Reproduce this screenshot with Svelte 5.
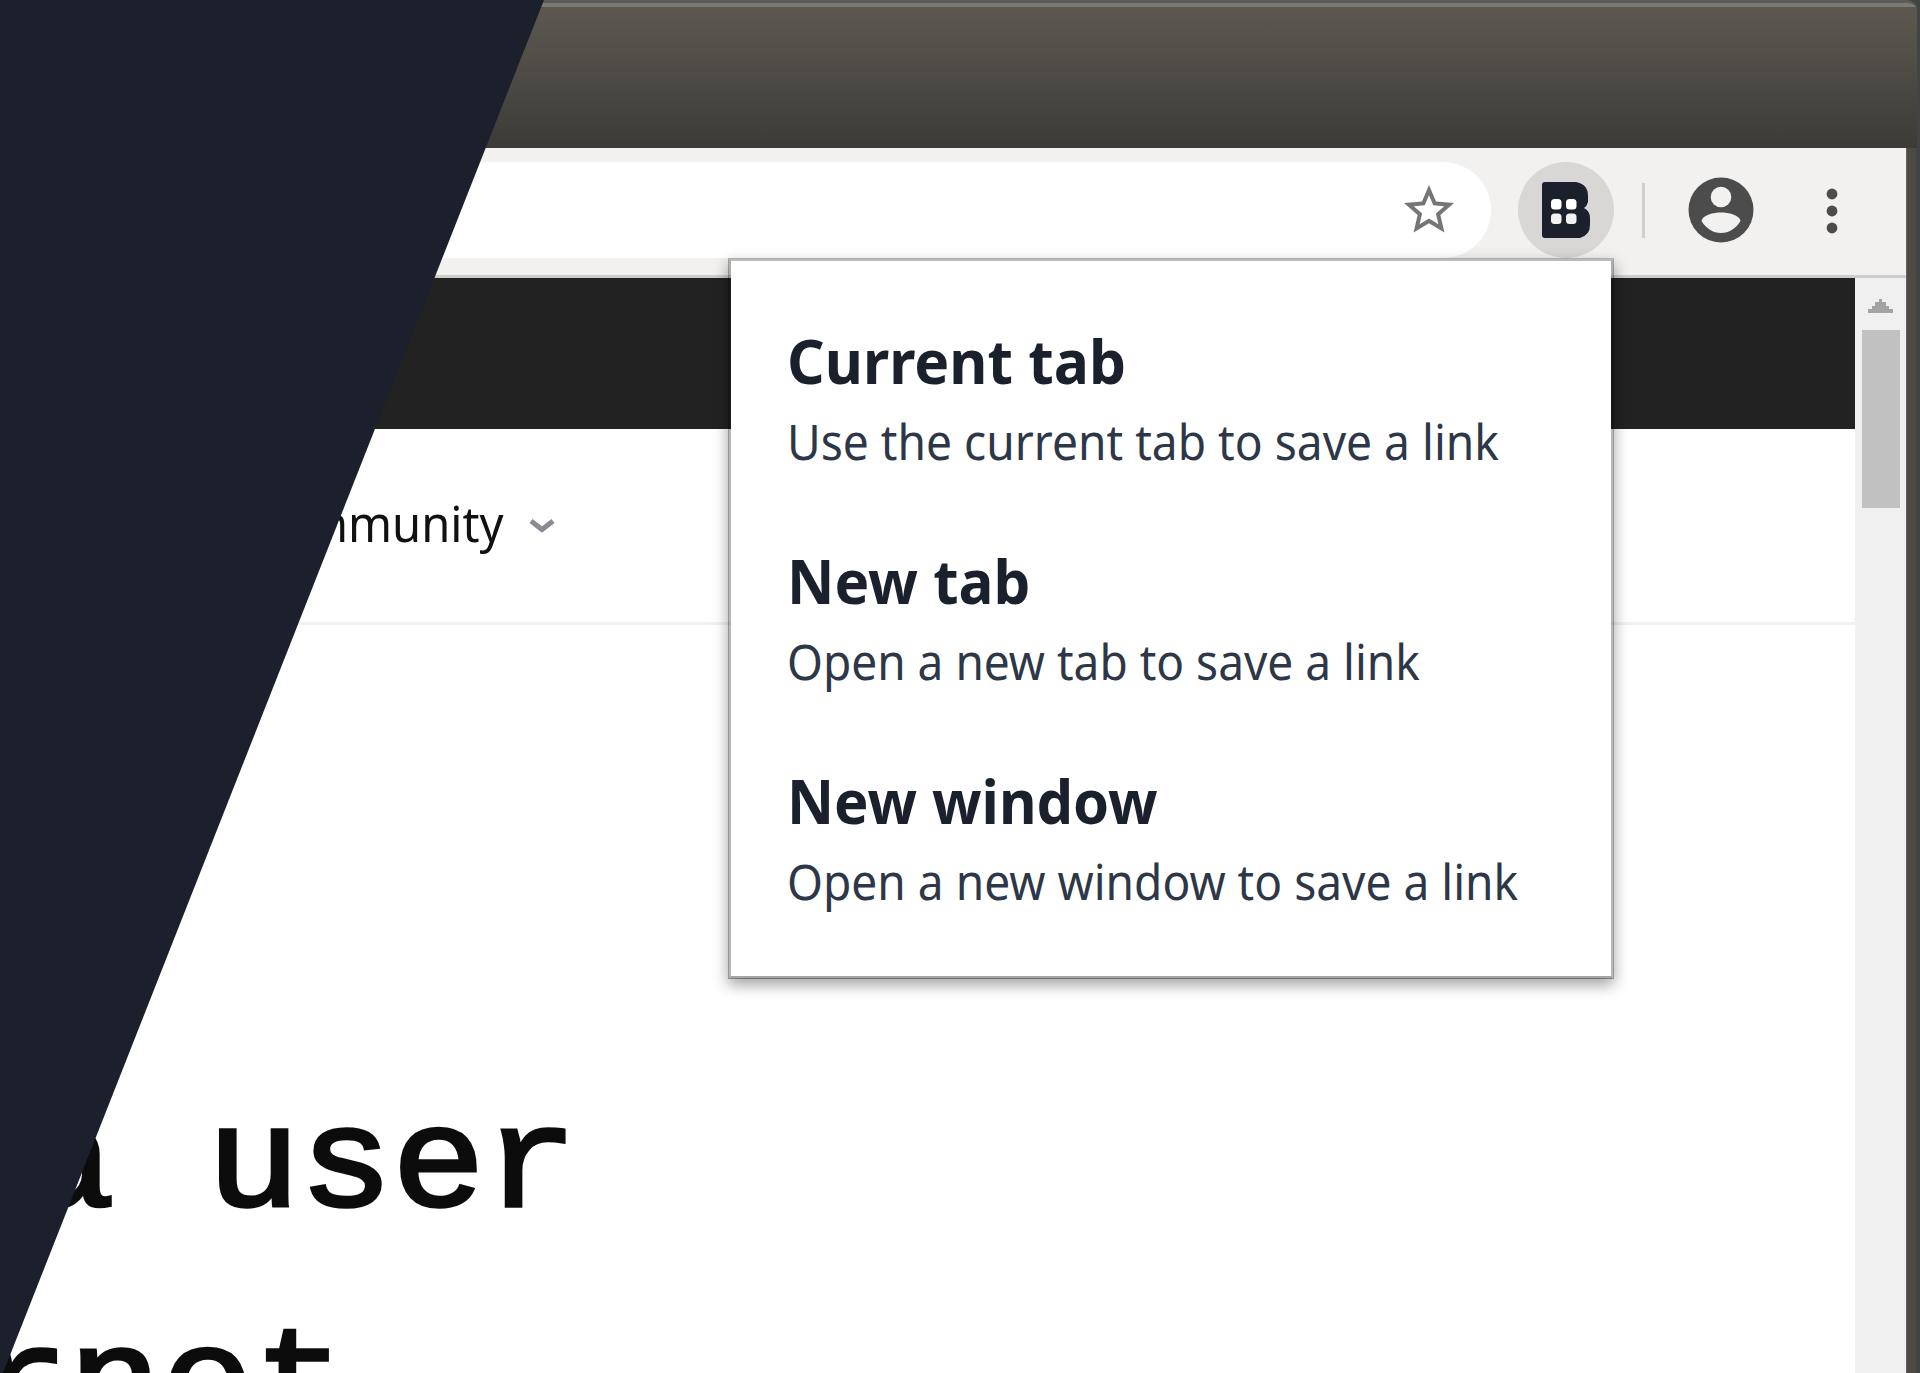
<script>
  const options = [
    { title: 'Current tab', text: 'Use the current tab to save a link', tw: 339, dw: 712 },
    { title: 'New tab', text: 'Open a new tab to save a link', tw: 243, dw: 633 },
    { title: 'New window', text: 'Open a new window to save a link', tw: 371, dw: 731 }
  ];

  // Condenses or widens a label horizontally so it fills the given width.
  function fit(node, width) {
    const natural = node.offsetWidth;
    if (natural) node.style.setProperty('--fit', width / natural);
  }
</script>

<div class="screen">
  <header class="titlebar"></header>

  <div class="window">
    <div class="content">
      <div class="toolbar">
        <div class="omnibox">
          <svg class="star" viewBox="0 0 24 24"><path d="M22 9.24l-7.19-.62L12 2 9.19 8.63 2 9.24l5.46 4.73L5.82 21 12 17.27 18.18 21l-1.63-7.03L22 9.24zM12 15.4l-3.76 2.27 1-4.28-3.32-2.88 4.38-.38L12 6.1l1.71 4.04 4.38.38-3.32 2.88 1 4.28L12 15.4z" /></svg>
        </div>
        <div class="extension">
          <svg width="48" height="56" viewBox="0 0 48 56">
            <path fill="#1b202c" d="M3 0H34Q46 2 46 14V20Q45 24 42 26Q48 29 48 36V43Q48 53 38 56H3Q0 56 0 53V3Q0 0 3 0Z" />
            <g fill="#fff"><rect x="9" y="17" width="10.5" height="10.5" rx="3.5" /><rect x="24" y="17" width="10.5" height="10.5" rx="3.5" /></g>
            <g fill="#f1f1f0"><rect x="9" y="31.500" width="10.500" height="10.500" rx="3.500" /><rect x="24" y="31.500" width="10.500" height="10.500" rx="3.500" /></g>
          </svg>
        </div>
        <div class="divider"></div>
        <svg class="avatar" viewBox="0 0 66 66">
          <circle cx="33" cy="33" r="32.500" fill="#4c4c4c" />
          <circle cx="33" cy="20" r="10.300" fill="#f2f1ef" />
          <path fill="#f2f1ef" d="M13.500 44C14 38 26 35.500 33 35.500S52 38 52.500 44C48 51.500 41 56 33 56S18 51.500 13.500 44Z" />
        </svg>
        <svg class="kebab" viewBox="0 0 12 46">
          <circle cx="6" cy="6" r="5.400" /><circle cx="6" cy="23" r="5.400" /><circle cx="6" cy="40" r="5.400" />
        </svg>
      </div>

      <div class="viewport">
        <main class="page">
          <div class="banner"></div>
          <nav class="nav">
            <span class="nav-label"><span class="fit" use:fit={200}>mmunity</span></span>
            <svg class="chevron" viewBox="0 0 28 18"><path d="M3 4L14 12.500L25 4" /></svg>
          </nav>
          <h1 class="headline"><span>a user</span><span class="second">rnet</span></h1>
        </main>
        <aside class="scrollbar">
          <svg class="arrow" viewBox="0 0 25 14"><path d="M0 14V10H4V7H7V3H11V0H14V3H18V7H21V10H25V14Z" /></svg>
          <div class="thumb"></div>
        </aside>
      </div>
    </div>
    <div class="frame"></div>
  </div>

  <div class="popup">
    {#each options as option}
      <div class="option">
        <div class="title"><span class="fit" use:fit={option.tw}>{option.title}</span></div>
        <div class="desc"><span class="fit" use:fit={option.dw}>{option.text}</span></div>
      </div>
    {/each}
  </div>

  <div class="wedge"></div>
</div>

<style>
  :global(body) { margin: 0; overflow: hidden; }
  .screen {
    position: relative;
    width: 1920px;
    height: 1373px;
    overflow: hidden;
    display: flex;
    flex-direction: column;
    background: #424444;
    font-family: 'Noto Sans', 'Open Sans', sans-serif;
  }
  .titlebar {
    box-sizing: border-box;
    flex: none;
    height: 148px;
    margin-right: 3px;
    border-top: 3px solid #5b5b5b;
    border-top-right-radius: 10px;
    background: linear-gradient(#7d7a73 0 4px, #5c584f 4px, #54514a 30%, #3c3b37 100%);
  }
  .window { flex: 1; min-height: 0; display: flex; }
  .content { width: 1906px; display: flex; flex-direction: column; }
  .frame { width: 10px; background: #4c4a42; box-shadow: inset 1px 0 #64625c; }
  .toolbar {
    box-sizing: border-box;
    flex: none;
    height: 130px;
    padding-bottom: 3px;
    border-bottom: 3px solid #cdcdcc;
    display: flex;
    align-items: center;
    background: #f2f1ef;
  }
  .omnibox {
    box-sizing: border-box;
    width: 1491px;
    height: 96px;
    padding-right: 32px;
    border-radius: 0 48px 48px 0;
    display: flex;
    align-items: center;
    justify-content: flex-end;
    background: #fff;
  }
  .star { width: 60px; height: 60px; fill: #757575; }
  .extension {
    width: 96px;
    height: 96px;
    margin-left: 27px;
    border-radius: 50%;
    display: grid;
    place-items: center;
    background: #d8d7d5;
  }
  .divider { width: 3px; height: 55px; margin-left: 28px; background: #cfcfce; }
  .avatar { width: 66px; height: 66px; margin-left: 43px; }
  .kebab { width: 12px; height: 46px; margin: 2px 0 0 72px; fill: #4c4c4c; }
  .viewport { flex: 1; min-height: 0; display: flex; }
  .page { width: 1855px; background: #fff; overflow: hidden; }
  .banner { height: 151px; background: #222; }
  .nav {
    box-sizing: border-box;
    height: 196px;
    padding: 0 0 5px 304px;
    border-bottom: 3px solid #f1f1f5;
    display: flex;
    align-items: center;
    color: #111;
  }
  .nav-label { width: 198px; font-size: 49px; line-height: 68px; }
  .chevron { width: 28px; height: 18px; margin: 6px 0 0 26px; fill: none; stroke: #8a8a96; stroke-width: 5; }
  .fit {
    display: inline-block;
    white-space: nowrap;
    transform: scaleX(var(--fit, 1));
    transform-origin: left;
  }
  .headline {
    margin: 0;
    padding: 421px 0 0 22px;
    display: flex;
    flex-direction: column;
    font: 400 155px/239px 'Liberation Mono', monospace;
    letter-spacing: -0.5px;
    white-space: pre;
    color: #0c0c0c;
    -webkit-text-stroke: 4px #0c0c0c;
    transform: scaleY(0.92);
    transform-origin: 0 587px;
  }
  .second { margin-left: -46px; }
  .scrollbar {
    width: 51px;
    display: flex;
    flex-direction: column;
    align-items: center;
    background: #f0f0f0;
  }
  .arrow { width: 25px; height: 14px; margin-top: 21px; fill: #a3a3a3; }
  .thumb { width: 38px; height: 178px; margin-top: 17px; background: #c1c1c1; }
  .popup {
    box-sizing: border-box;
    position: absolute;
    left: 728px;
    top: 258px;
    width: 886px;
    height: 721px;
    padding: 58px 0 0 56px;
    border: 3px solid rgba(0, 0, 0, 0.28);
    border-top-color: rgba(0, 0, 0, 0.22);
    border-bottom-color: rgba(0, 0, 0, 0.35);
    background: #fff padding-box;
    box-shadow: 0 6px 14px rgba(0, 0, 0, 0.36);
  }
  .option { height: 220px; }
  .title { height: 89px; font-size: 61px; line-height: 84px; font-weight: 700; color: #1a202c; }
  .desc { height: 66px; font-size: 49px; line-height: 66px; color: #2d3748; }
  .wedge { position: absolute; inset: 0; background: #1b202c; clip-path: polygon(0 0, 544px 0, 3px 100%, 0 100%); }
</style>
